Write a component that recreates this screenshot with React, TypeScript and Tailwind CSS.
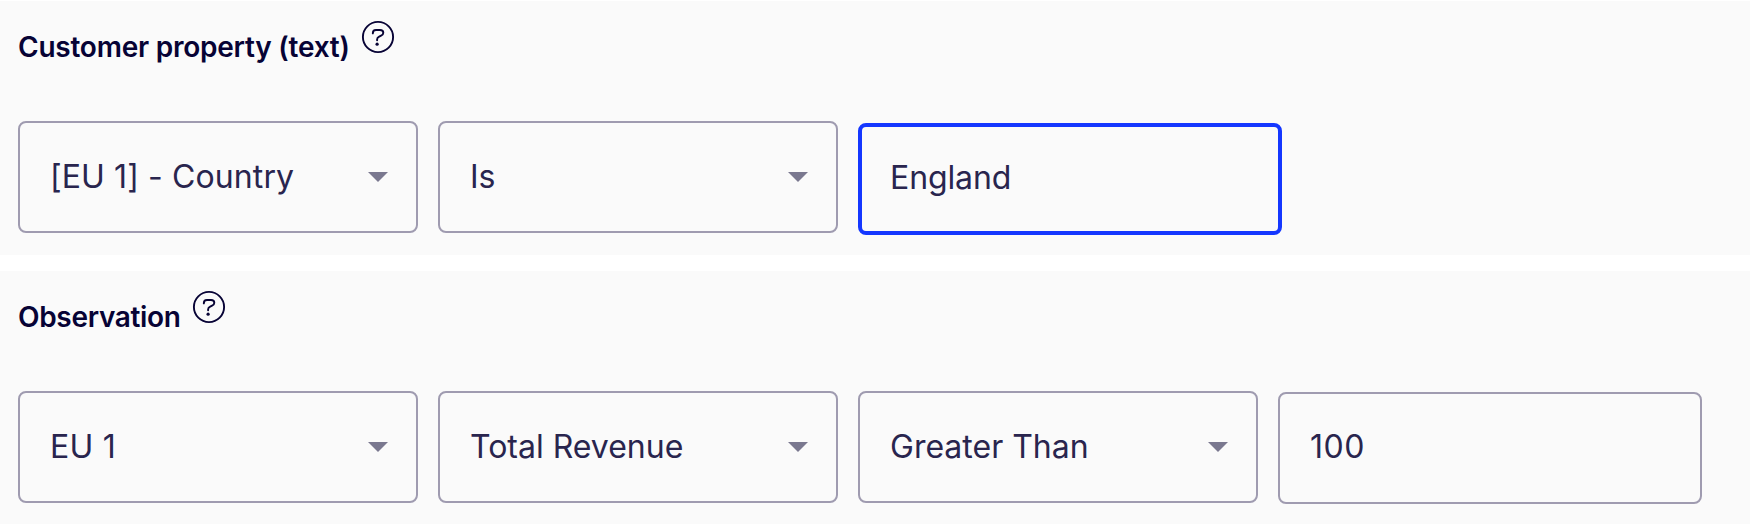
import React from "react";

function Help() {
  return (
    <svg className="mt-[19px] ml-[11.5px] size-[34px] shrink-0" viewBox="0 0 34 34" fill="none" stroke="#070335" strokeWidth="1.9" strokeLinecap="round" strokeLinejoin="round">
      <circle cx="17" cy="17" r="15.1" />
      <path d="M11.8 13.4c0-2.1 1.2-3.4 3.2-3.4h4c2 0 3.3 1.1 3.3 2.8 0 1.5-.8 2.3-2.2 2.9l-1.9.9c-1.5.7-2.1 1.5-2.1 2.9v.8" />
      <circle cx="16.1" cy="24.2" r="1.6" fill="#070335" stroke="none" />
    </svg>
  );
}

function Heading({ text, tracking = "tracking-[-0.23px]" }: { text: string; tracking?: string }) {
  return (
    <div className="flex h-[120px] items-start">
      <h2 className={`mt-[28px] text-[28px] leading-[36px] font-semibold whitespace-nowrap text-[#070335] ${tracking}`}>{text}</h2>
      <Help />
    </div>
  );
}

function Select({ text, tracking = "tracking-normal" }: { text: string; tracking?: string }) {
  return (
    <button className="flex h-[112px] w-[400px] items-center justify-between rounded-lg border-2 border-[#9f9bb0] pr-[28px] pl-[30px] text-[32px] text-[#29254e]">
      <span className={`whitespace-nowrap ${tracking}`}>{text}</span>
      <svg className="h-[10px] w-[20px]" viewBox="0 0 20 10"><path d="M0 0h20L10 10z" fill="#7a788f" /></svg>
    </button>
  );
}

function Field({ text, active = false }: { text: string; active?: boolean }) {
  return (
    <div className={`flex h-[112px] w-[424px] items-center rounded-lg pb-[2px] text-[32px] text-[#29254e] ${active ? "mt-[2px] border-4 border-[#1437ff] pl-[28px] tracking-[-0.1px]" : "mt-px border-2 border-[#9f9bb0] pl-[30px] tracking-[0.5px]"}`}>
      {text}
    </div>
  );
}

export default function App() {
  return (
    <main className="flex h-[530px] w-[1750px] flex-col overflow-hidden bg-white pt-px font-['Inter',sans-serif]">
      <section className="h-[254px] shrink-0 bg-[#fafafa] pl-[18px]">
        <Heading text="Customer property (text)" />
        <div className="flex items-start gap-5">
          <Select text="[EU 1] - Country" tracking="tracking-[0.1px]" />
          <Select text="Is" />
          <Field text="England" active />
        </div>
      </section>
      <section className="mt-4 h-[253px] shrink-0 bg-[#fafafa] pl-[18px]">
        <Heading text="Observation" tracking="tracking-[-0.32px]" />
        <div className="flex items-start gap-5">
          <Select text="EU 1" tracking="tracking-[0.2px]" />
          <Select text="Total Revenue" />
          <Select text="Greater Than" />
          <Field text="100" />
        </div>
      </section>
    </main>
  );
}
